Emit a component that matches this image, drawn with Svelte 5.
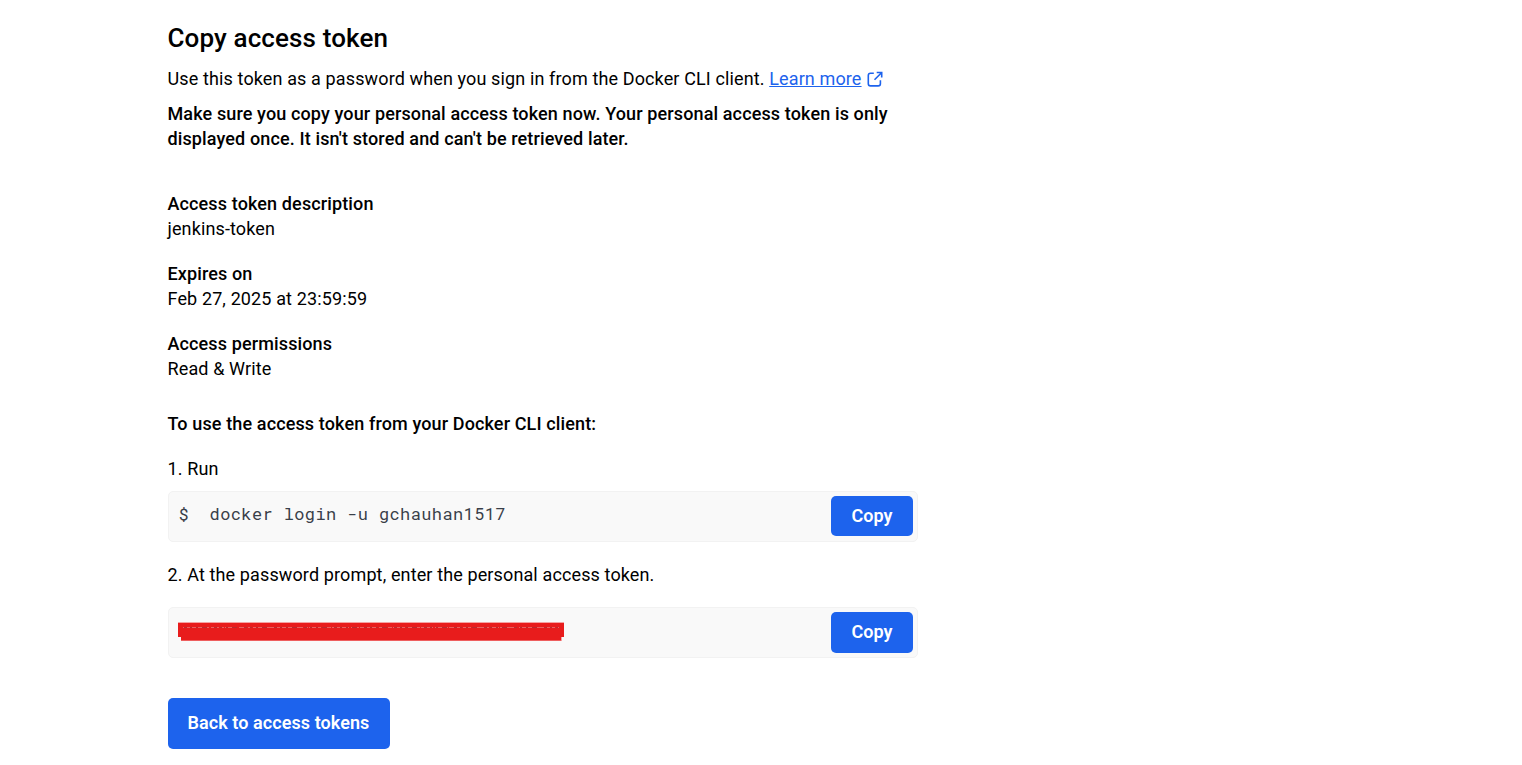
<script>
  const details = [
    ['Access token description', 'jenkins-token'],
    ['Expires on', 'Feb 27, 2025 at 23:59:59'],
    ['Access permissions', 'Read & Write']
  ];
</script>

<main>
  <h1>Copy access token</h1>
  <p class="intro">
    Use this token as a password when you sign in from the Docker CLI client. <a href="#learn">Learn more</a>
    <svg viewBox="0 0 16 16" width="16" height="16" fill="none" stroke="#1d63ed" stroke-width="1.6"><path d="M6.800 2.300H3.500Q1.300 2.300 1.300 4.500V12.700Q1.300 14.900 3.500 14.900H11.200Q13.400 14.900 13.400 12.700V9.300M9.700 1.500H14.700V6.500M14.500 1.700L7.500 8.700" /></svg>
  </p>
  <p class="warn">Make sure you copy your personal access token now. Your personal access token is only displayed once. It isn't stored and can't be retrieved later.</p>
  <dl>
    {#each details as [name, value]}
      <div><dt>{name}</dt><dd>{value}</dd></div>
    {/each}
  </dl>
  <p class="usage">To use the access token from your Docker CLI client:</p>
  <p class="run">1. Run</p>
  <div class="code"><code><span class="prompt">$</span>docker login -u gchauhan1517</code><button>Copy</button></div>
  <p class="second">2. At the password prompt, enter the personal access token.</p>
  <div class="code secret">
    <svg width="386" height="20" viewBox="0 0 386 20">
      <path fill="#f5a3a3" d="M0 0H386V15H384V19H3V15H0Z" />
      <path fill="#e81c1c" d="M0 1H386V15H383V18.500H3V15H0Z" />
      <path stroke="#e9605f" stroke-width="1" stroke-dasharray="8 1 4 1 12 2" d="M5 5.500H381" />
      <path stroke="#b92b30" stroke-width="1" stroke-dasharray="3 3 2 4 2 4 5 7" d="M6 5.500H380" />
    </svg>
    <button>Copy</button>
  </div>
  <button class="back">Back to access tokens</button>
</main>

<style>
  :global(body) { background: #fff; }
  main { box-sizing: border-box; width: 918px; padding: 20px 0 0 167.5px; font: 18px/25px Roboto, sans-serif; letter-spacing: .126px; color: #000; }
  h1, p, dl, dd { margin: 0; }
  h1 { font-size: 26px; line-height: 36px; font-weight: 500; }
  .intro { display: flex; align-items: center; margin-top: 10px; white-space: pre; }
  a { color: #1d63ed; text-decoration: underline; }
  .intro svg { margin-left: 5px; }
  .warn { margin-top: 10px; font-weight: 500; }
  dl { display: flex; flex-direction: column; gap: 20px; margin-top: 40px; }
  dt, .usage { font-weight: 500; }
  .usage { margin-top: 30px; }
  .run { margin-top: 20px; }
  .code { display: flex; box-sizing: border-box; height: 51px; margin-top: 10px; padding: 4px; border: 1px solid #f2f2f2; border-radius: 5px; background: #f9f9f9; justify-content: space-between; }
  code { padding: 5px 6px; font: 17px/25px "Roboto Mono", "DejaVu Sans Mono", monospace; letter-spacing: .38px; color: #393f49; }
  .prompt { margin-right: 20.5px; }
  button { padding: 0 0 2px; border: 0; border-radius: 5px; background: #1d63ed; color: #fff; font: 600 18px Roboto, sans-serif; letter-spacing: .07px; width: 82px; height: 40px; }
  .second { margin-top: 20px; }
  .secret { margin-top: 20px; }
  .secret button { height: 41px; }
  .secret svg { margin: 10px 0 0 5px; }
  .back { display: block; width: 222px; height: 51px; margin-top: 40px; }
</style>
